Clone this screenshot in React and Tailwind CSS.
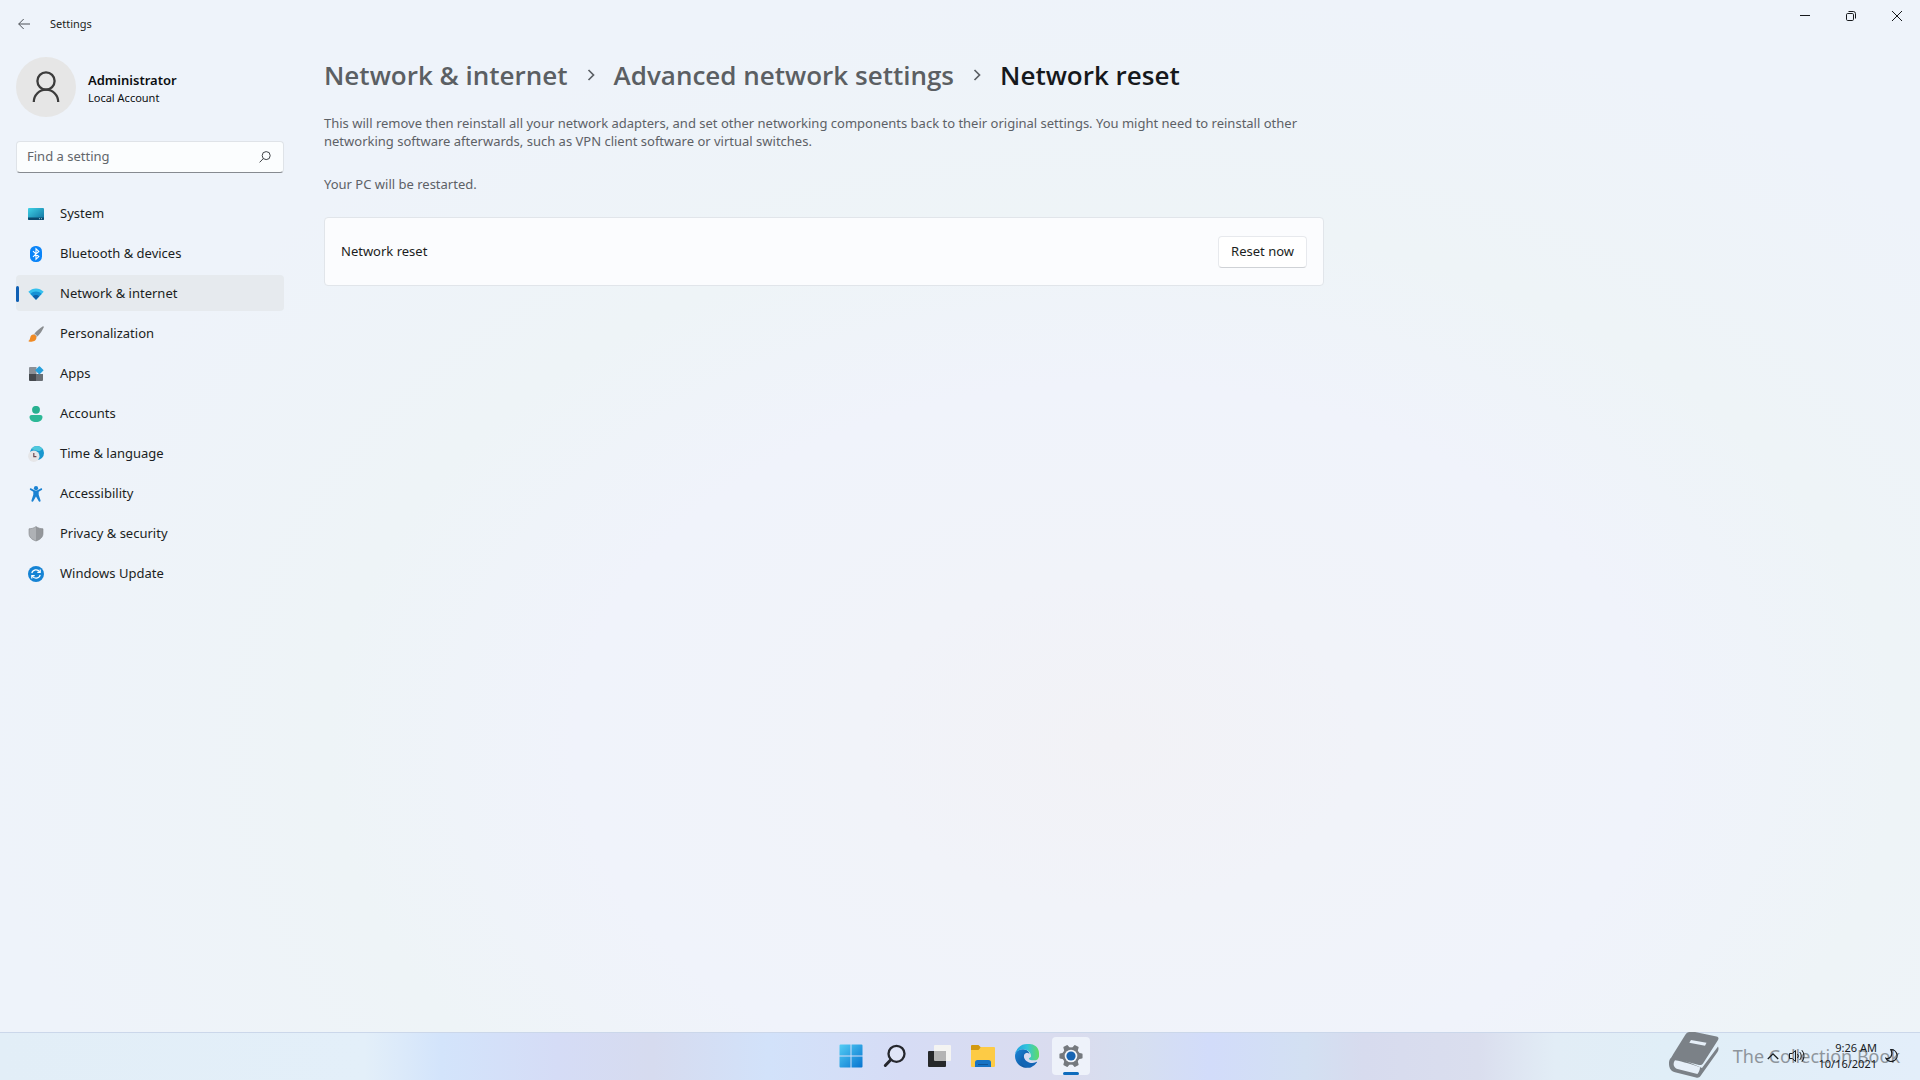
import { useState } from 'react';

const navItems = [
  { name: 'System', Icon: SystemIcon },
  { name: 'Bluetooth & devices', Icon: BluetoothIcon },
  { name: 'Network & internet', Icon: NetworkIcon },
  { name: 'Personalization', Icon: BrushIcon },
  { name: 'Apps', Icon: AppsIcon },
  { name: 'Accounts', Icon: AccountIcon },
  { name: 'Time & language', Icon: TimeIcon },
  { name: 'Accessibility', Icon: AccessibilityIcon },
  { name: 'Privacy & security', Icon: ShieldIcon },
  { name: 'Windows Update', Icon: UpdateIcon },
];

const taskbarApps = [
  { name: 'Start', Icon: StartIcon },
  { name: 'Search', Icon: SearchAppIcon },
  { name: 'Task view', Icon: TaskViewIcon },
  { name: 'File Explorer', Icon: ExplorerIcon },
  { name: 'Microsoft Edge', Icon: EdgeIcon },
  { name: 'Settings', Icon: GearIcon, open: true },
];

// --- Sidebar icons ---

function SystemIcon() {
  return (
    <svg className="size-4" viewBox="0 0 16 16">
      <defs>
        <linearGradient id="sys" x1="0" y1="0" x2="1" y2="1">
          <stop offset="0" stopColor="#3fd2e6" />
          <stop offset="1" stopColor="#0f6f9e" />
        </linearGradient>
      </defs>
      <rect y="2" width="16" height="12" rx="1" fill="url(#sys)" />
      <path d="M0 11.5h16V13a1 1 0 0 1-1 1H1a1 1 0 0 1-1-1z" fill="#0b4a6e" />
      <path d="M11 12.7h1M13 12.7h1" stroke="#b8e4f2" strokeWidth=".8" />
    </svg>
  );
}

function BluetoothIcon() {
  return (
    <svg className="size-4" viewBox="0 0 16 16">
      <rect x="2" width="12" height="16" rx="5.5" fill="#0a84f8" />
      <path d="M5 5.2l5.800 5.400L8 13.200V2.800l2.800 2.600L5 10.800" fill="none" stroke="#fff" strokeWidth="1.100" />
    </svg>
  );
}

function NetworkIcon() {
  return (
    <svg className="size-4" viewBox="0 0 16 16">
      <path d="M8 13.8.3 5.8C4.800 1.300 11.200 1.300 15.700 5.800z" fill="#35c0ee" />
      <path d="M8 13.8 2.400 8C5.600 4.800 10.400 4.800 13.600 8z" fill="#1390d4" />
      <path d="M8 13.8 4.700 10.300C6.600 8.500 9.400 8.500 11.300 10.300z" fill="#0d5ea8" />
    </svg>
  );
}

function BrushIcon() {
  return (
    <svg className="size-4" viewBox="0 0 16 16">
      <path d="M14.600.4c.9-.5 1.500.2 1.100 1.100-1.400 3.200-3.600 6.300-6 8.700L6.500 7.500C8.800 4.700 11.700 2.100 14.600.4z" fill="#8a8d90" />
      <path d="M6.500 7.500 5.300 8.900l2.900 2.700 1.500-1.400z" fill="#b9bcbf" />
      <path d="M5.300 8.600c1.700 0 3.400 1.500 3.100 3.300C8 14.600 5.300 15.700 2.600 15.700 1.400 15.700.600 15.300.200 15c1.500-.600 1.600-1.700 2-3.300.5-1.900 1.600-3.100 3.100-3.100z" fill="#f08a24" />
    </svg>
  );
}

function AppsIcon() {
  return (
    <svg className="size-4" viewBox="0 0 16 16">
      <path d="M2 1h6.500v7H1V2a1 1 0 0 1 1-1z" fill="#8b9097" />
      <path d="M1 8h7v7H2a1 1 0 0 1-1-1z" fill="#45494e" />
      <path d="M8 8h7v6a1 1 0 0 1-1 1H8z" fill="#6a6f75" />
      <rect x="8.300" y="1.200" width="6.200" height="6.200" rx=".8" transform="rotate(45 11.400 4.300)" fill="#27a0dc" />
    </svg>
  );
}

function AccountIcon() {
  return (
    <svg className="size-4" viewBox="0 0 16 16">
      <circle cx="8" cy="3.800" r="3.900" fill="#27b090" />
      <path d="M3.600 9h8.800c1.200 0 2.100.9 2.100 2 0 3-2.800 5-6.500 5s-6.500-2-6.500-5c0-1.100.9-2 2.100-2z" fill="#2cb896" />
    </svg>
  );
}

function TimeIcon() {
  return (
    <svg className="size-4" viewBox="0 0 16 16">
      <circle cx="9" cy="7" r="7" fill="#1997cf" />
      <path d="M9 0a7 7 0 0 1 5.500 2.700C13 5 10.500 5.500 8 4.500S4 3.500 3.200 3A7 7 0 0 1 9 0z" fill="#4fc8dc" />
      <circle cx="5.800" cy="10.200" r="5.700" fill="#e6e6e8" />
      <path d="M5.800 7v3.600h2.600" fill="none" stroke="#6b4a52" strokeWidth="1.200" />
    </svg>
  );
}

function AccessibilityIcon() {
  return (
    <svg className="size-4" viewBox="0 0 16 16" fill="#1a82d2">
      <circle cx="8" cy="2.200" r="2.100" />
      <path d="M3.300 2.500 6.600 4.300c.9.400 1.900.4 2.800 0l3.300-1.800c1.200-.6 2 1 1 1.600l-3 1.700v3l1.800 5.500c.4 1.300-1.400 2-1.900.700L8 10.400 5.400 15c-.5 1.300-2.300.600-1.900-.700l1.800-5.500v-3l-3-1.700c-1-.6-.2-2.200 1-1.600z" />
    </svg>
  );
}

function ShieldIcon() {
  return (
    <svg className="size-4" viewBox="0 0 16 16">
      <path d="M8 .5c2 1.500 4.300 2.200 7 2.300v4.700c0 3.500-2.500 6-7 7.500z" fill="#94979b" />
      <path d="M8 .5C6 2 3.700 2.700 1 2.800v4.700c0 3.500 2.500 6 7 7.500z" fill="#aeb1b5" />
      <path d="M8 .5C6 2 3.700 2.700 1 2.800v4.700c0 3.500 2.500 6 7 7.500 4.500-1.500 7-4 7-7.500V2.800C12.300 2.700 10 2 8 .5z" fill="none" stroke="#85888c" strokeWidth=".6" />
    </svg>
  );
}

function UpdateIcon() {
  return (
    <svg className="size-4" viewBox="0 0 16 16">
      <circle cx="8" cy="8" r="8" fill="#1583d4" />
      <path d="M3.800 7.200A4.300 4.300 0 0 1 11.700 6M12.200 8.800A4.300 4.300 0 0 1 4.300 10" fill="none" stroke="#fff" strokeWidth="1.200" />
      <path d="M12.200 3.500v2.900H9.300M3.800 12.500V9.600h2.900" fill="none" stroke="#fff" strokeWidth="1.200" />
    </svg>
  );
}

// --- Taskbar icons ---

function StartIcon() {
  return (
    <svg className="size-6" viewBox="0 0 24 24">
      <defs>
        <linearGradient id="start" x1="0" y1="0" x2="24" y2="24" gradientUnits="userSpaceOnUse">
          <stop offset="0" stopColor="#55cff5" />
          <stop offset="1" stopColor="#0572cf" />
        </linearGradient>
      </defs>
      <path d="M1.500.5h10v11h-11v-10a1 1 0 0 1 1-1zM12.500.5h10a1 1 0 0 1 1 1v10h-11zM.5 12.500h11v11h-10a1 1 0 0 1-1-1zM12.500 12.500h11v10a1 1 0 0 1-1 1h-10z" fill="url(#start)" />
    </svg>
  );
}

function SearchAppIcon() {
  return (
    <svg className="size-6" viewBox="0 0 24 24" fill="none" stroke="#25272d">
      <circle cx="13.500" cy="9.800" r="8" strokeWidth="2.300" fill="#ffffff40" />
      <path d="M7.800 15.800 2.300 21.500" strokeWidth="3" strokeLinecap="round" />
    </svg>
  );
}

function TaskViewIcon() {
  return (
    <svg className="size-6" viewBox="0 0 24 24">
      <rect x="7" y="1" width="17" height="16" rx="1" fill="#f4f4f2" />
      <rect x="1" y="7" width="18" height="16" rx="1" fill="#26282a" />
      <path d="M7 7h12v10H8a1 1 0 0 1-1-1z" fill="#b4b4b4" />
    </svg>
  );
}

function ExplorerIcon() {
  return (
    <svg className="size-6" viewBox="0 0 24 24">
      <path d="M0 2a1 1 0 0 1 1-1h6.500l2.500 2.500L8 7H0z" fill="#d39a10" />
      <path d="M0 6h7.500L10 3h13a1 1 0 0 1 1 1v18a1 1 0 0 1-1 1H1a1 1 0 0 1-1-1z" fill="#fdcb45" />
      <path d="M4 23v-4.500A2.500 2.500 0 0 1 6.500 16h11a2.500 2.500 0 0 1 2.500 2.500V23z" fill="#1673c4" />
      <path d="M7 20.500h10" stroke="#0f5596" />
    </svg>
  );
}

function EdgeIcon() {
  return (
    <svg className="size-6" viewBox="0 0 24 24">
      <defs>
        <linearGradient id="edgeTop" x1="0" y1="0" x2="1" y2="0">
          <stop offset="0" stopColor="#1f9fe0" />
          <stop offset=".5" stopColor="#32c4dc" />
          <stop offset="1" stopColor="#62dc62" />
        </linearGradient>
        <linearGradient id="edgeBottom" x1="0" y1="0" x2="1" y2="1">
          <stop offset="0" stopColor="#1b86d8" />
          <stop offset="1" stopColor="#0c4a93" />
        </linearGradient>
      </defs>
      <path d="M21.660 17.860a8.900 8.900 0 0 1-1 .450 9.600 9.600 0 0 1-3.400.610c-4.480 0-8.380-3.080-8.380-7.040a2.990 2.990 0 0 1 1.560-2.610c-4.050.170-5.090 4.390-5.090 6.860 0 6.990 6.440 7.700 7.830 7.700.750 0 1.880-.220 2.560-.430a12 12 0 0 0 6.300-5.100.330.330 0 0 0-.380-.440z" fill="#1265b5" />
      <path d="M9.900 22.650a7.400 7.400 0 0 1-2.130-2A7.570 7.570 0 0 1 10.570 9.200c.310-.140.830-.400 1.530-.390 1 0 2.200.800 2.450 1.500C13.800 6.500 10.500 5.300 7.300 5.300 3 5.300 0 8.500 0 12c0 6.800 5.600 12 12.200 12-.8-.300-1.600-.800-2.300-1.350z" fill="url(#edgeBottom)" />
      <path d="M14.280 13.960c-.090.110-.380.270-.380.620 0 .290.190.570.530.800 1.600 1.120 4.630.970 4.640.970a6.600 6.600 0 0 0 3.380-.940A6.860 6.860 0 0 0 24 9.500C24.030 7 23.110 5.350 22.730 4.610 20.370 0 15.280 0 12 0A12 12 0 0 0 0 11.830C.05 8.180 3.670 5.230 8 5.230c.350 0 2.340.040 4.190 1.010 1.630.860 2.490 1.890 3.080 2.920.620 1.060.730 2.410.730 2.940s-.270 1.330-1.720 1.860z" fill="url(#edgeTop)" />
    </svg>
  );
}

function GearIcon() {
  return (
    <svg className="size-6" viewBox="0 0 24 24">
      <g fill="#75797e">
        <circle cx="12" cy="12" r="8.700" />
        <g stroke="#75797e" strokeWidth="1.500" strokeLinejoin="round">
          <path d="M10.300 1.200h3.400l1.100 4.500H9.200zM10.300 22.800h3.400l1.100-4.500H9.200z" transform="rotate(30 12 12)" />
          <path d="M10.300 1.200h3.400l1.100 4.500H9.200zM10.300 22.800h3.400l1.100-4.500H9.200z" transform="rotate(90 12 12)" />
          <path d="M10.300 1.200h3.400l1.100 4.500H9.200zM10.300 22.800h3.400l1.100-4.500H9.200z" transform="rotate(150 12 12)" />
        </g>
      </g>
      <circle cx="12" cy="12" r="6.300" fill="#f2f5fa" />
      <circle cx="12" cy="12" r="4.600" fill="#1765b3" />
    </svg>
  );
}

function TitleBar() {
  return (
    <header className="flex h-12 items-start justify-between">
      <div className="flex h-12 items-center gap-[14px] pl-3">
        <button aria-label="Back" className="flex h-6 w-6 items-center justify-center">
          <svg className="size-3" viewBox="0 0 12 12" fill="none" stroke="#4d5157">
            <path d="M12 6H.7M5.700 1 .7 6l5 5" />
          </svg>
        </button>
        <h1 className="text-[11px] text-[#1b1d20]">Settings</h1>
      </div>
      <div className="flex">
        <button aria-label="Minimize" className="flex h-8 w-[46px] items-center justify-center">
          <svg className="size-[10px]" viewBox="0 0 10 10" stroke="#16181b">
            <path d="M0 4.500h10" />
          </svg>
        </button>
        <button aria-label="Restore" className="flex h-8 w-[46px] items-center justify-center">
          <svg className="size-[10px]" viewBox="0 0 10 10" fill="none" stroke="#16181b">
            <rect x=".5" y="2.500" width="7" height="7" rx="1.200" />
            <path d="M2.500.5h4.800a2.200 2.200 0 0 1 2.200 2.200v4.800" />
          </svg>
        </button>
        <button aria-label="Close" className="flex h-8 w-[46px] items-center justify-center">
          <svg className="size-[10px]" viewBox="0 0 10 10" stroke="#16181b">
            <path d="M0 0l10 10M10 0 0 10" />
          </svg>
        </button>
      </div>
    </header>
  );
}

function Sidebar() {
  const [current, setCurrent] = useState('Network & internet');

  return (
    <aside className="w-[268px] shrink-0 pt-[9px]">
      <div className="flex items-center gap-3">
        <div className="flex size-[60px] items-center justify-center rounded-full bg-[#e6e6e6]">
          <svg className="size-8" viewBox="0 0 32 32" fill="none" stroke="#3c3c3c" strokeWidth="2.300">
            <circle cx="16" cy="10" r="8.600" />
            <path d="M3.800 31c0-7 5.500-12.300 12.200-12.300S28.200 24 28.200 31" />
          </svg>
        </div>
        <div className="pt-1">
          <p className="text-[13px] leading-[18px] font-semibold text-[#0b0d10]">Administrator</p>
          <p className="text-[11px] leading-[18px] text-[#0b0d10]">Local Account</p>
        </div>
      </div>

      <div className="mt-6 flex h-8 items-center rounded border border-[#dfe3e8] border-b-[#868a90] bg-[#fbfdfe] pr-3 pl-[10px]">
        <input
          type="text"
          aria-label="Find a setting"
          placeholder="Find a setting"
          className="min-w-0 flex-1 bg-transparent text-[13px] outline-none placeholder:text-[#62666b]"
        />
        <svg className="size-3" viewBox="0 0 12 12" fill="none" stroke="#3f4347">
          <circle cx="7.200" cy="4.600" r="4" />
          <path d="M4.400 7.500.6 11.400" />
        </svg>
      </div>

      <nav className="mt-[22px] flex flex-col gap-1">
        {navItems.map(({ name, Icon }) => (
          <a
            key={name}
            href="#"
            onClick={() => setCurrent(name)}
            className={`flex h-9 items-center rounded pt-[2px] text-[13px] text-[#1b1e22] ${current === name ? 'bg-[#e6eaee]' : ''}`}
          >
            <span className={`h-4 w-[3px] rounded-full ${current === name ? 'bg-[#0f5fb4]' : ''}`} />
            <span className="mr-4 ml-[9px]">
              <Icon />
            </span>
            {name}
          </a>
        ))}
      </nav>
    </aside>
  );
}

function Chevron() {
  return (
    <svg className="mx-[17px] h-3 w-3" viewBox="0 0 12 12" fill="none" stroke="#5b5f64" strokeWidth="1.700">
      <path d="M3.500 1 8.500 6l-5 5" />
    </svg>
  );
}

function NetworkReset() {
  return (
    <main className="max-w-[1000px] flex-1">
      <h2 className="flex h-[54px] items-center font-['Open_Sans','Noto_Sans',sans-serif] text-[26px] font-semibold text-[#5b5f63]">
        <a href="#">Network & internet</a>
        <Chevron />
        <a href="#">Advanced network settings</a>
        <Chevron />
        <span className="text-[#16191c]">Network reset</span>
      </h2>
      <p className="mt-3 text-[13px] leading-[18px] text-[#5d6166]">
        This will remove then reinstall all your network adapters, and set other networking components back to their
        original settings. You might need to reinstall other networking software afterwards, such as VPN client software
        or virtual switches.
      </p>
      <p className="mt-[25px] text-[13px] leading-[18px] text-[#5d6166]">Your PC will be restarted.</p>

      <section className="mt-6 flex h-[69px] items-center justify-between rounded border border-[#e1e5ea] bg-[#fbfcfe] px-4">
        <span className="text-[13px] text-[#1b1e22]">Network reset</span>
        <button className="h-8 rounded border border-[#e7e9ed] border-b-[#cfd2d6] bg-white px-3 text-[13px] text-[#1b1e22]">
          Reset now
        </button>
      </section>
    </main>
  );
}

function Tray() {
  return (
    <div className="relative flex h-full flex-1 items-center justify-end pr-[22px] pb-[2px] text-[#16191c]">
      {/* logo laid over the clock area */}
      <div className="pointer-events-none absolute inset-y-0 right-5 flex items-center gap-[14px] pb-[2px]">
        <svg className="h-12 w-[50px]" viewBox="0 0 50 48" fill="#7b8187">
          <path d="M22.500 0H26L47.500 4.500C49.500 5 50 6 49 8L34 31.500C33 33 31.500 33.300 30 33L3.500 26C1.500 26 3 24.500 4 22.500L16.500 2.500C18 .5 19.500-.3 22.500 0z" />
          <path d="M5 24C0 25.500-.5 30.500.3 34.500.8 37.500 3 39.500 6 40.300l21 5.200c2 .5 3.500 0 4.500-1.500L48.500 20c1-1.500 1.500-3.500.5-5.500L33 36z" />
          <path d="M6 28.300c8 1.500 18 4.300 25 6.900 0 2.500-1 4.800-2.600 6.800L8.500 37C4.500 36 3.500 31.500 6 28.300z" fill="#e6eff8" />
          <path d="M22 8 37.500 10.800 36 13.800 20.300 10.800z" fill="#e6eff8" />
        </svg>
        <span className="text-[18px] leading-6 whitespace-nowrap text-[#8e959c]">The Collection Book</span>
      </div>
      <div className="relative flex items-center">
        <button aria-label="Show hidden icons" className="mr-[10px]">
          <svg className="size-3" viewBox="0 0 12 12" fill="none" stroke="currentColor" strokeWidth="1.300">
            <path d="M.8 9 6 3.800 11.200 9" />
          </svg>
        </button>
        <button aria-label="Volume">
          <svg className="size-4" viewBox="0 0 16 16" fill="none" stroke="currentColor">
            <path d="M.5 5.500h2.700L6.500 2.500v11L3.200 10.500H.5zM8.500 6a3 3 0 0 1 0 4M10.700 4a6 6 0 0 1 0 8M12.900 2.200a9 9 0 0 1 0 11.600" />
          </svg>
        </button>
        <div className="w-[72px] text-right text-[11px] leading-4">
          <p>9:26 AM</p>
          <p>10/16/2021</p>
        </div>
        <button aria-label="Focus assist" className="ml-2">
          <svg className="size-[13px]" viewBox="0 0 13 13" fill="none" stroke="currentColor" strokeWidth="1.200">
            <path d="M5.800.7A5.900 5.900 0 1 1 .9 9.200C2.500 9.800 4.500 9.300 5.700 7.800 7 6 7 3 5.800.7z" />
          </svg>
        </button>
      </div>
    </div>
  );
}

function Taskbar() {
  return (
    <footer className="flex h-12 items-center border-t border-[#cbd7ea] bg-[linear-gradient(90deg,#e2eef7_0%,#e3eff9_19%,#d3e4fb_23%,#d5dcf6_29%,#d6dbef_34%,#d2e2fa_40%,#d6dcf5_47%,#dadcee_56%,#d6dff0_59%,#d2dcfa_63%,#d3e0f2_68%,#d7dbee_71%,#dadeee_77%,#e2edf6_81%,#e0eef7_87%,#e3eefa_100%)]">
      <div className="flex-1 pr-6" />
      <div className="flex h-full pb-px">
        {taskbarApps.map(({ name, Icon, open }) => (
          <button key={name} aria-label={name} className="flex h-full w-11 items-center justify-center">
            <span
              className={`relative flex size-[38px] items-center justify-center rounded ${open ? 'bg-[#eef2fa]' : ''}`}
            >
              <Icon />
              {open && <span className="absolute bottom-0 h-[3px] w-4 rounded-full bg-[#0f6cbd]" />}
            </span>
          </button>
        ))}
      </div>
      <Tray />
    </footer>
  );
}

export default function App() {
  return (
    <div className="flex min-h-screen flex-col bg-[#eef3fa] font-['Noto_Sans','Open_Sans',sans-serif]">
      <div className="flex flex-1 flex-col bg-[radial-gradient(ellipse_at_58%_72%,#f2f2f6_0%,#f1f3f9_16%,#f0f3fb_34%,#eef4f7_50%,#eef3fa_72%)]">
        <TitleBar />
        <div className="flex flex-1 gap-10 px-4">
          <Sidebar />
          <NetworkReset />
        </div>
      </div>
      <Taskbar />
    </div>
  );
}
